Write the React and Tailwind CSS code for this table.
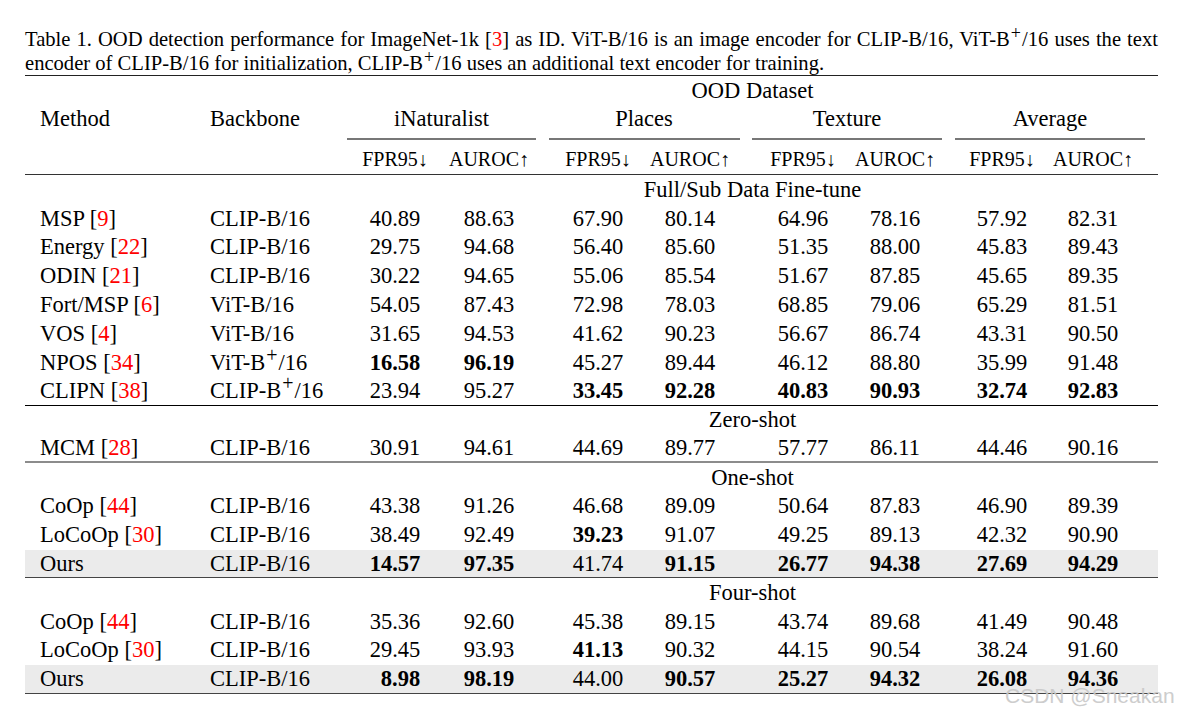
const sections = [
  {
    title: 'Full/Sub Data Fine-tune',
    end: 'border-b border-black',
    rows: [
      ['MSP', '9', 'CLIP-B/16', ['40.89', '88.63', '67.90', '80.14', '64.96', '78.16', '57.92', '82.31']],
      ['Energy', '22', 'CLIP-B/16', ['29.75', '94.68', '56.40', '85.60', '51.35', '88.00', '45.83', '89.43']],
      ['ODIN', '21', 'CLIP-B/16', ['30.22', '94.65', '55.06', '85.54', '51.67', '87.85', '45.65', '89.35']],
      ['Fort/MSP', '6', 'ViT-B/16', ['54.05', '87.43', '72.98', '78.03', '68.85', '79.06', '65.29', '81.51']],
      ['VOS', '4', 'ViT-B/16', ['31.65', '94.53', '41.62', '90.23', '56.67', '86.74', '43.31', '90.50']],
      ['NPOS', '34', 'ViT-B+/16', ['*16.58', '*96.19', '45.27', '89.44', '46.12', '88.80', '35.99', '91.48']],
      ['CLIPN', '38', 'CLIP-B+/16', ['23.94', '95.27', '*33.45', '*92.28', '*40.83', '*90.93', '*32.74', '*92.83']]
    ]
  },
  {
    title: 'Zero-shot',
    end: 'border-b-2 border-[#8c8c8c]',
    rows: [
      ['MCM', '28', 'CLIP-B/16', ['30.91', '94.61', '44.69', '89.77', '57.77', '86.11', '44.46', '90.16']]
    ]
  },
  {
    title: 'One-shot',
    end: 'border-b-[1.5px] border-[#444]',
    rows: [
      ['CoOp', '44', 'CLIP-B/16', ['43.38', '91.26', '46.68', '89.09', '50.64', '87.83', '46.90', '89.39']],
      ['LoCoOp', '30', 'CLIP-B/16', ['38.49', '92.49', '*39.23', '91.07', '49.25', '89.13', '42.32', '90.90']],
      ['Ours', null, 'CLIP-B/16', ['*14.57', '*97.35', '41.74', '*91.15', '*26.77', '*94.38', '*27.69', '*94.29']]
    ]
  },
  {
    title: 'Four-shot',
    end: 'border-b-[1.5px] border-[#444]',
    rows: [
      ['CoOp', '44', 'CLIP-B/16', ['35.36', '92.60', '45.38', '89.15', '43.74', '89.68', '41.49', '90.48']],
      ['LoCoOp', '30', 'CLIP-B/16', ['29.45', '93.93', '*41.13', '90.32', '44.15', '90.54', '38.24', '91.60']],
      ['Ours', null, 'CLIP-B/16', ['*8.98', '*98.19', '44.00', '*90.57', '*25.27', '*94.32', '*26.08', '*94.36']]
    ]
  }
]

const groups = [
  { name: 'iNaturalist', box: 'w-[202px]', cells: ['w-[96px]', 'w-[92px]'], line: 'w-[189px]' },
  { name: 'Places', box: 'w-[203px]', cells: ['w-[98px]', 'w-[86px]'], line: 'w-[191px]' },
  { name: 'Texture', box: 'w-[203px]', cells: ['w-[102px]', 'w-[82px]'], line: 'w-[190px]' },
  { name: 'Average', box: 'w-[203px]', cells: ['w-[94px]', 'w-[88px]'], line: 'w-[190px]' }
]

function Plus({ text }) {
  // "ViT-B+/16" -> ViT-B with a raised plus
  const [head, tail] = text.split('+')
  if (tail === undefined) return text
  return (
    <>
      {head}
      <sup className="-top-[8px] px-[1px] text-[20px]">+</sup>
      {tail}
    </>
  )
}

function Value({ v, width }) {
  const bold = v.startsWith('*')
  const num = bold ? v.slice(1) : v
  return (
    <div className={`${width} text-center ${bold ? 'font-bold' : ''} ${num.length < 5 ? 'pl-[11px]' : ''}`}>
      {num}
    </div>
  )
}

function Row({ row, last, end }) {
  const [method, cite, backbone, values] = row
  const ours = method === 'Ours'
  return (
    <div className={`flex h-[28.8px] items-center ${ours ? 'bg-[#ebebeb]' : ''} ${last ? end : ''}`}>
      <div className="w-[172px] pl-[15px]">
        {method}
        {cite && (
          <>
            {' '}[<span className="text-[#ff0000]">{cite}</span>]
          </>
        )}
      </div>
      <div className="w-[150px] pl-[13px]">
        <Plus text={backbone} />
      </div>
      {groups.map((g, gi) => (
        <div key={g.name} className={`flex ${g.box}`}>
          <Value v={values[gi * 2]} width={g.cells[0]} />
          <Value v={values[gi * 2 + 1]} width={g.cells[1]} />
        </div>
      ))}
    </div>
  )
}

function SectionTitle({ title }) {
  return (
    <div className="flex h-[28.8px] items-center">
      <div className="w-[322px]" />
      <div className="w-[811px] text-center">{title}</div>
    </div>
  )
}

export default function App() {
  return (
    <div className="relative h-[712px] w-[1178px] overflow-hidden bg-white font-['Liberation_Serif',serif] text-black">
      <div className="w-[1158px] pl-[25px] pt-[27px]">
        <div className="text-[20.6px] leading-[24px]">
          <div className="text-justify [text-align-last:justify]">
            Table 1. OOD detection performance for ImageNet-1k [<span className="text-[#ff0000]">3</span>] as ID. ViT-B/16 is an image encoder for CLIP-B/16, ViT-B<sup className="-top-[7px] px-[1px] text-[18px]">+</sup>/16 uses the text
          </div>
          <div>
            encoder of CLIP-B/16 for initialization, CLIP-B<sup className="-top-[7px] px-[1px] text-[18px]">+</sup>/16 uses an additional text encoder for training.
          </div>
        </div>

        <div className="border-t border-[#222] text-[22.5px]">
          <div className="flex h-[28.8px] items-center">
            <div className="w-[322px]" />
            <div className="w-[811px] text-center">OOD Dataset</div>
          </div>
          <div className="flex h-[28.8px] items-center">
            <div className="w-[172px] pl-[15px]">Method</div>
            <div className="w-[150px] pl-[13px]">Backbone</div>
            {groups.map((g) => (
              <div key={g.name} className={`${g.box} pr-[13px] text-center`}>
                {g.name}
              </div>
            ))}
          </div>
          <div className="flex h-[10.6px] items-center">
            <div className="w-[322px]" />
            {groups.map((g) => (
              <div key={g.name} className={g.box}>
                <div className={`h-[1.5px] bg-[#777] ${g.line}`} />
              </div>
            ))}
          </div>
          <div className="flex h-[31px] items-center border-b-[1.5px] border-[#333] text-[20px]">
            <div className="w-[322px]" />
            {groups.map((g) => (
              <div key={g.name} className={`flex ${g.box}`}>
                <div className={`${g.cells[0]} text-center`}>FPR95↓</div>
                <div className={`${g.cells[1]} text-center`}>AUROC↑</div>
              </div>
            ))}
          </div>

          {sections.map((s) => (
            <div key={s.title}>
              <SectionTitle title={s.title} />
              {s.rows.map((r, i) => (
                <Row key={r[0]} row={r} last={i === s.rows.length - 1} end={s.end} />
              ))}
            </div>
          ))}
        </div>
      </div>

      <div className="absolute left-[1005px] top-[680px] whitespace-nowrap font-['Liberation_Sans',sans-serif] text-[21px] text-[#c8c8c8] opacity-90">
        CSDN @Sneakan
      </div>
    </div>
  )
}
